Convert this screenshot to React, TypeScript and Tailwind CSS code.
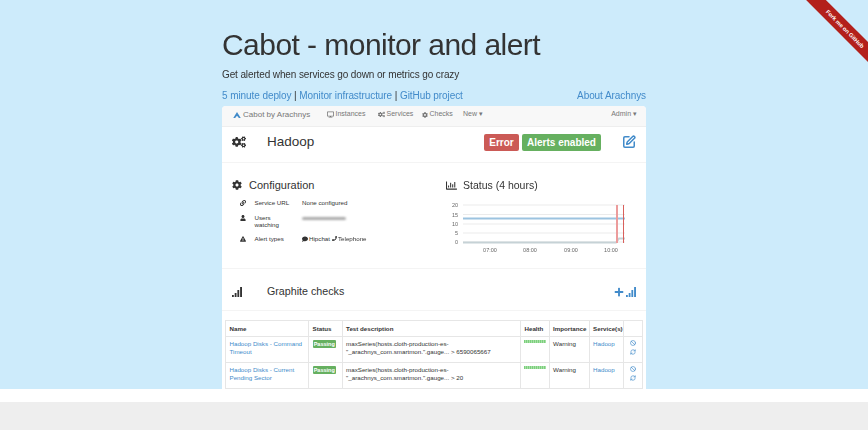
import { FaCog, FaCogs, FaComment, FaDesktop, FaExclamationTriangle, FaLink, FaPhone, FaPlus, FaUser, FaRegChartBar } from "react-icons/fa";
import { Ban, RefreshCw, SquarePen } from "lucide-react";

const font = { fontFamily: '"Liberation Sans", Arial, sans-serif' };

const checks = [
  { name: "Hadoop Disks - Command Timeout", limit: "> 6590065667" },
  { name: "Hadoop Disks - Current Pending Sector", limit: "> 20" },
];

function SignalBars({ className }: { className: string }) {
  return (
    <svg viewBox="0 0 10 10" className={className}>
      <rect x="0" y="8" width="1.8" height="2" />
      <rect x="2.7" y="6" width="1.8" height="4" />
      <rect x="5.4" y="3" width="1.8" height="7" />
      <rect x="8.1" y="0" width="1.9" height="10" />
    </svg>
  );
}

function NavBar() {
  return (
    <div className="flex h-[21px] items-center border-b border-[#eeeeee] bg-[#f8f8f8] pb-[3px] pl-[11px] pr-[9px] text-[7px] text-[#777777]">
      <svg viewBox="0 0 10 8" className="h-[6px] w-[8px] fill-[#428bca]">
        <path d="M5 0 10 8 7.5 8 5 5 2.5 8 0 8Z" />
      </svg>
      <span className="ml-[2px] w-[84px] text-[8px]">Cabot by Arachnys</span>
      <span className="flex w-[51px] items-center gap-[1.5px]">
        <FaDesktop className="text-[7px]" /> Instances
      </span>
      <span className="flex w-[44px] items-center gap-[1.5px]">
        <FaCogs className="text-[7px]" /> Services
      </span>
      <span className="flex w-[41px] items-center gap-[1.5px]">
        <FaCog className="text-[6px]" /> Checks
      </span>
      <span>New ▾</span>
      <span className="ml-auto">Admin ▾</span>
    </div>
  );
}

function ServiceHeader() {
  return (
    <div className="flex h-[36px] items-center border-b border-[#f4f4f4] pb-[5px] pl-[10px] pr-[10px]">
      <FaCogs className="text-[14px] text-[#333333]" />
      <span className="ml-[21px] text-[13.5px] font-medium text-[#333333]">Hadoop</span>
      <span className="ml-auto flex h-[17px] w-[35px] items-center justify-center rounded-[2px] bg-[#cb5a56] text-[10px] font-bold text-white">
        Error
      </span>
      <span className="ml-[3px] flex h-[17px] w-[79px] items-center justify-center rounded-[2px] bg-[#66b060] text-[10px] font-bold text-white">
        Alerts enabled
      </span>
      <SquarePen className="ml-[21px] h-[14px] w-[14px] text-[#428bca]" strokeWidth={2.6} />
    </div>
  );
}

function Configuration() {
  return (
    <div className="w-[224px] pl-[10px] pt-[14px] text-[6.2px] text-[#333333]">
      <div className="flex items-center gap-[7px] text-[11px] text-[#333333]">
        <FaCog className="text-[10px]" /> Configuration
      </div>
      <div className="mt-[4px] flex h-[11px] items-center">
        <FaLink className="ml-[8px] w-[6px] text-[6px]" />
        <span className="ml-[8.5px] w-[47.5px]">Service URL</span>
        <span>None configured</span>
      </div>
      <div className="mt-[2px] flex h-[20px] items-center">
        <FaUser className="ml-[8px] mb-[5px] w-[6px] text-[6px]" />
        <span className="ml-[8.5px] mr-[21.5px] w-[26px] leading-[7px]">Users watching</span>
        <div className="mb-[5px] h-[3px] w-[44px] rounded-sm bg-[#aaaaaa] blur-[1px]" />
      </div>
      <div className="mt-[3px] flex h-[11px] items-center">
        <FaExclamationTriangle className="ml-[8px] w-[6px] text-[6px]" />
        <span className="ml-[8.5px] w-[47.5px]">Alert types</span>
        <span className="flex items-center gap-[1px]">
          <FaComment className="text-[6px]" /> Hipchat <FaPhone className="ml-[1px] text-[5px]" /> Telephone
        </span>
      </div>
    </div>
  );
}

function StatusChart() {
  return (
    <svg viewBox="7 0 200 60" className="mt-[6px] h-[60px] w-[200px]" style={font}>
      {[0, 9.5, 19, 28, 37].map((y) => (
        <line key={y} x1="24" x2="186" y1={y + 5} y2={y + 5} stroke="#e6e6e6" strokeWidth="0.8" />
      ))}
      {["20", "15", "10", "5", "0"].map((t, i) => (
        <text key={t} x="19" y={[7, 16.5, 26, 35, 44][i]} fontSize="5.5" textAnchor="end" fill="#666666">
          {t}
        </text>
      ))}
      <line x1="24" x2="186" y1="18.5" y2="18.5" stroke="#9cc3e0" strokeWidth="2" />
      <polyline points="24,42.5 177,42.5 180,38.5 186,38.5" fill="none" stroke="#c6d2d6" strokeWidth="2" />
      <line x1="178" x2="178" y1="5" y2="43" stroke="#ec9c9c" strokeWidth="2" />
      <line x1="184.5" x2="184.5" y1="5" y2="43" stroke="#d9605c" strokeWidth="1" />
      {[["07:00", 51], ["08:00", 91], ["09:00", 132], ["10:00", 172]].map(([t, x]) => (
        <text key={t} x={x} y="52" fontSize="5.5" textAnchor="middle" fill="#666666">
          {t}
        </text>
      ))}
    </svg>
  );
}

function Status() {
  return (
    <div className="pl-[1px] pt-[15px]">
      <div className="flex items-center gap-[6px] text-[10.5px] text-[#333333]">
        <FaRegChartBar className="text-[11px]" /> Status (4 hours)
      </div>
      <StatusChart />
    </div>
  );
}

function HealthBar() {
  return <div className="h-[3.5px] w-[22px] bg-[repeating-linear-gradient(90deg,#7ccf7c_0,#7ccf7c_1px,#a8e0a8_1px,#a8e0a8_2px)]" />;
}

function ChecksTable() {
  const th = "border border-[#e6e6e6] px-[3.5px] text-left text-[6.2px] font-bold text-[#333333]";
  const cell = "border border-[#e6e6e6] px-[3.5px] pt-[3px] align-top text-[6.2px] leading-[8.7px]";
  const td = `${cell} text-[#333333]`;
  const link = `${cell} text-[#428bca]`;
  return (
    <table className="ml-[3px] w-[416.6px] table-fixed border-collapse">
      <colgroup>
        <col className="w-[83px]" />
        <col className="w-[33.6px]" />
        <col className="w-[178.4px]" />
        <col className="w-[28.6px]" />
        <col className="w-[40px]" />
        <col className="w-[34.4px]" />
        <col className="w-[18.6px]" />
      </colgroup>
      <thead>
        <tr className="h-[15.5px]">
          <th className={th}>Name</th>
          <th className={th}>Status</th>
          <th className={th}>Test description</th>
          <th className={th}>Health</th>
          <th className={th}>Importance</th>
          <th className={th}>Service(s)</th>
          <th className={th}></th>
        </tr>
      </thead>
      <tbody>
        {checks.map((c) => (
          <tr key={c.name} className="h-[26px]">
            <td className={link}>{c.name}</td>
            <td className={td}>
              <span className="block w-[23.5px] rounded-[1px] bg-[#66b060] text-center text-[5.5px] font-bold leading-[8px] text-white">
                Passing
              </span>
            </td>
            <td className={`${td} whitespace-nowrap`}>
              maxSeries(hosts.cloth-production-es-
              <br />
              "_arachnys_com.smartmon.".gauge... {c.limit}
            </td>
            <td className={td}>
              <HealthBar />
            </td>
            <td className={td}>Warning</td>
            <td className={link}>Hadoop</td>
            <td className={link}>
              <Ban className="mx-auto mb-[3px] h-[6px] w-[6px]" strokeWidth={2.5} />
              <RefreshCw className="mx-auto h-[6px] w-[6px]" strokeWidth={2.5} />
            </td>
          </tr>
        ))}
      </tbody>
    </table>
  );
}

export default function App() {
  return (
    <div className="relative h-[430px] overflow-hidden bg-white" style={font}>
      <div className="h-[389px] bg-[#cdebfb]">
        <div className="mx-auto w-[424px]">
          <div className="blur-[0.3px]">
            <h1 className="pt-[26px] text-[30px] leading-[38px] tracking-[-0.55px] text-[#333333]">Cabot - monitor and alert</h1>
            <p className="mt-[3px] text-[10px] leading-[16px] tracking-[-0.12px] text-[#333333]">
              Get alerted when services go down or metrics go crazy
            </p>
            <div className="mt-[5px] flex text-[10px] leading-[16px] tracking-[-0.08px] text-[#333333]">
              <span>
                <a className="text-[#428bca]">5 minute deploy</a> | <a className="text-[#428bca]">Monitor infrastructure</a> |{" "}
                <a className="text-[#428bca]">GitHub project</a>
              </span>
              <a className="ml-auto text-[#428bca]">About Arachnys</a>
            </div>
          </div>
          <div className="mt-[2px] h-[283px] overflow-hidden rounded-t-[4px] bg-white blur-[0.3px]">
            <NavBar />
            <ServiceHeader />
            <div className="flex h-[106px] border-b border-[#f4f4f4]">
              <Configuration />
              <Status />
            </div>
            <div className="flex h-[42px] items-center border-b border-[#f4f4f4] pl-[10px] pr-[10px] pt-[4px]">
              <SignalBars className="h-[10px] w-[10px] fill-[#333333]" />
              <span className="ml-[25px] text-[10.7px] font-medium text-[#333333]">Graphite checks</span>
              <span className="ml-auto flex items-center gap-[2px] text-[#428bca]">
                <FaPlus className="text-[10px]" />
                <SignalBars className="h-[10px] w-[10px] fill-[#428bca]" />
              </span>
            </div>
            <div className="pt-[9px]">
              <ChecksTable />
            </div>
          </div>
        </div>
      </div>
      <div className="mt-[13px] h-[28px] bg-[#eeeeee]" />
      <div className="absolute left-[795px] top-[22px] flex h-[14px] w-[100px] rotate-45 items-center justify-center bg-[#b3201b] text-[5.7px] font-bold text-white">
        Fork me on GitHub
      </div>
    </div>
  );
}
